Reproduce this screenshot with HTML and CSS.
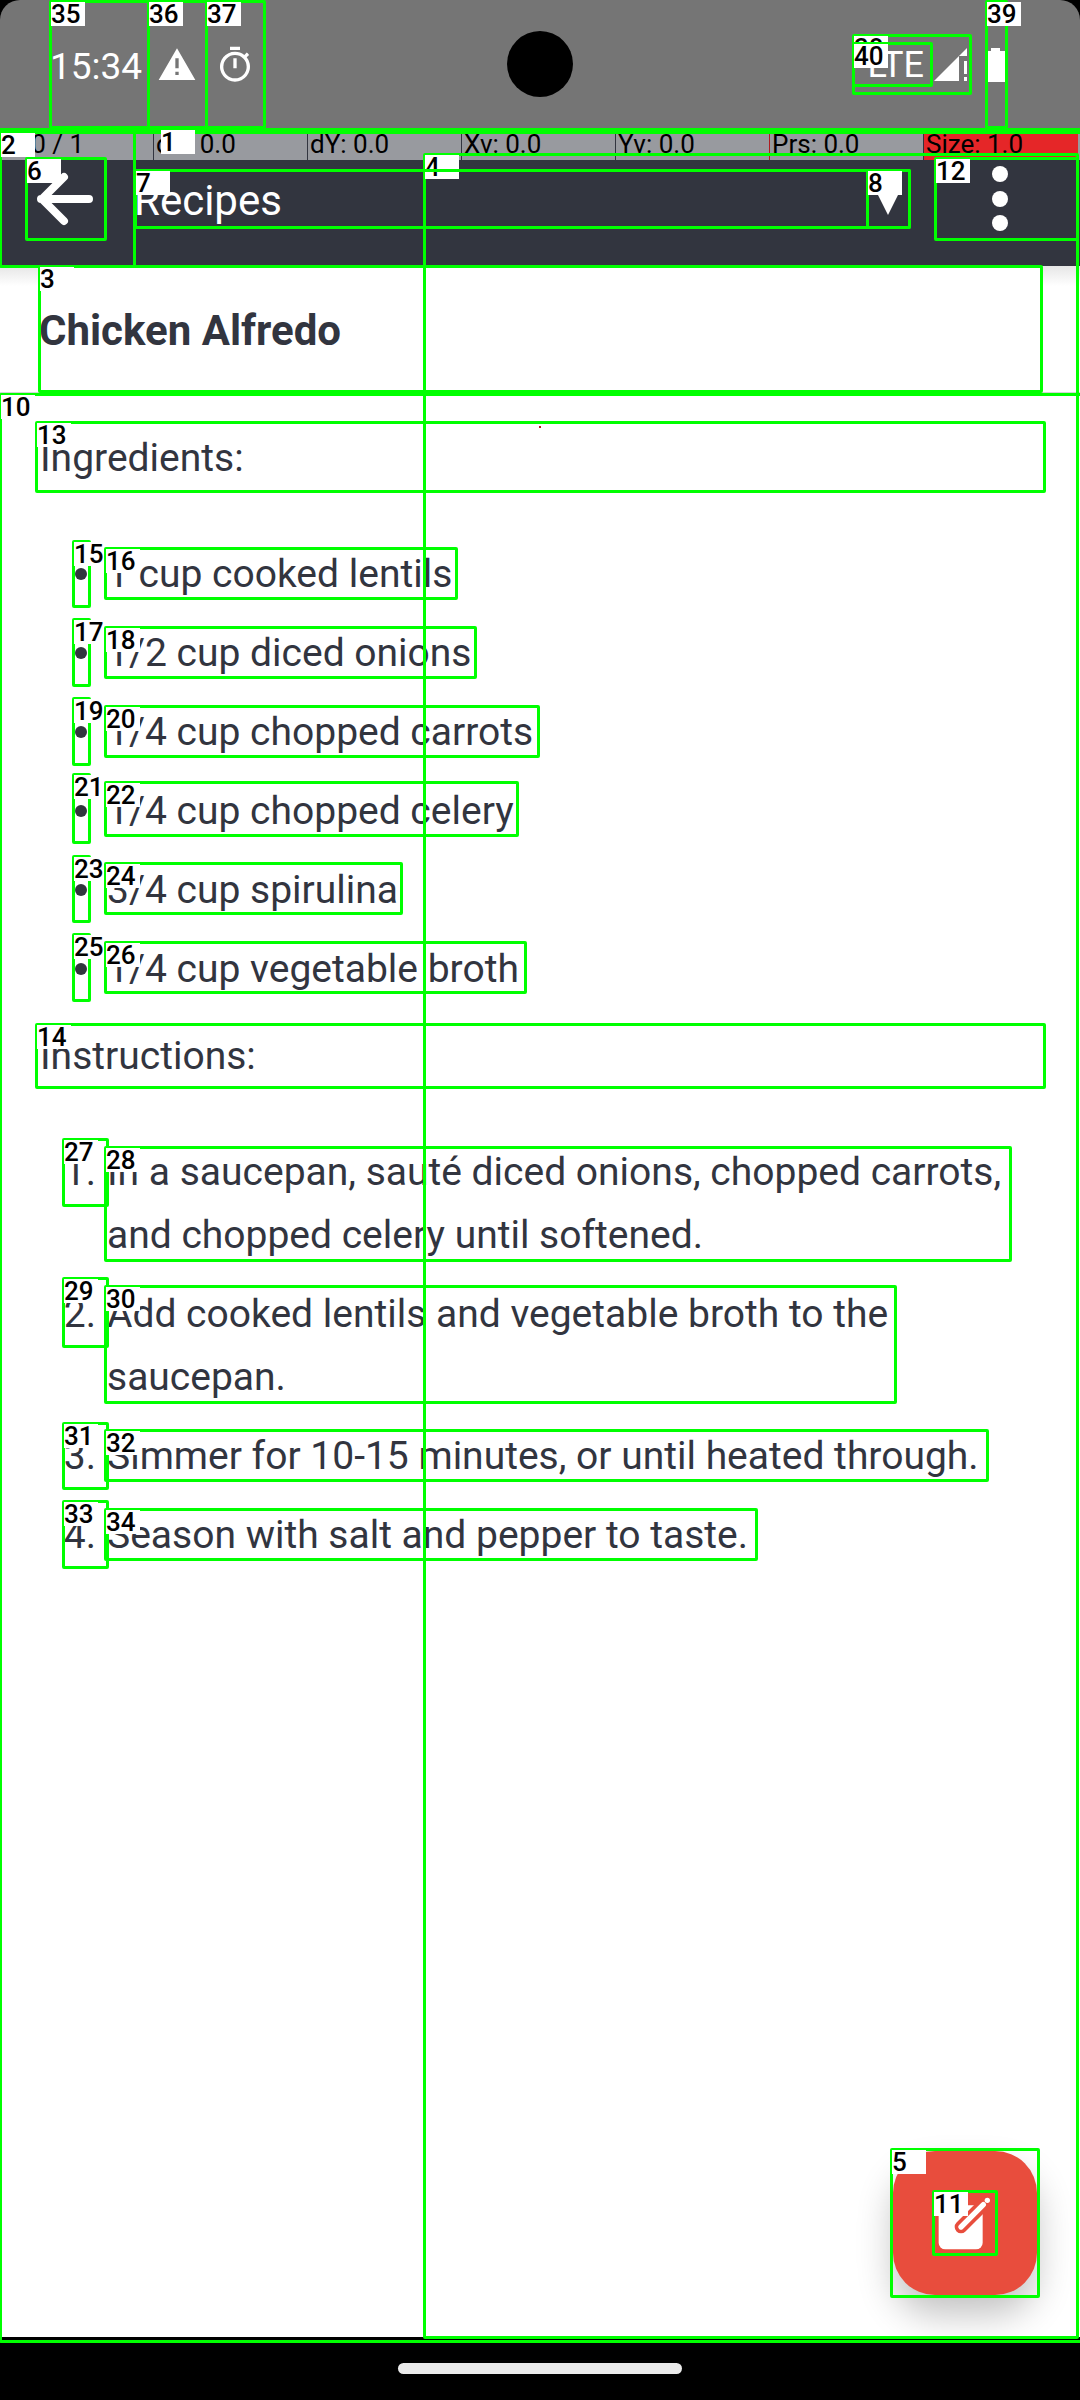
FILE: index.html
```html
<!DOCTYPE html>
<html lang="en">
<head>
<meta charset="utf-8">
<meta name="viewport" content="width=device-width, initial-scale=1">
<title>Recipes</title>
<link rel="stylesheet" href="styles.css">
</head>
<body>
<div class="screen">
  <div class="status">
    <div class="status-bar">
      <span class="clock">15:34</span>
      <svg class="status-icon" viewBox="0 0 24 24" aria-hidden="true"><path d="M1 21h22L12 2 1 21zm12-3h-2v-2h2v2zm0-4h-2V8h2v6z"/></svg>
      <svg class="status-icon timer" viewBox="0 0 24 24" aria-hidden="true"><path d="M9 1h6v2H9zM11 8h2v6h-2zM19.03 7.39l1.42-1.42c-.43-.51-.9-.99-1.41-1.41l-1.42 1.42A8.96 8.96 0 0 0 12 4a9 9 0 1 0 7.03 3.39zM12 20a7 7 0 1 1 0-14 7 7 0 0 1 0 14z"/></svg>
      <span class="network">LTE</span>
      <svg class="signal" viewBox="0 0 33 34" aria-hidden="true"><path d="M0 33L33 0V8H25V33zM30 13h3v13h-3zM30 29h3v4h-3z"/></svg>
      <svg class="battery" viewBox="0 0 18 34" aria-hidden="true"><path d="M4 0h9v3h5v31H0V3h4z"/></svg>
    </div>
    <span class="camera"></span>
  </div>

  <header class="toolbar">
    <button class="icon-button back" type="button" aria-label="Back">
      <svg viewBox="0 0 80 80" aria-hidden="true"><path d="M64 40H16M39 18L17 40l22 22"/></svg>
    </button>
    <button class="notebook" type="button">
      <span>Recipes</span>
      <svg viewBox="0 0 22 22" aria-hidden="true"><path d="M0 0h22L11 22z"/></svg>
    </button>
    <button class="icon-button more" type="button" aria-label="More options">
      <svg viewBox="0 0 16 66" aria-hidden="true"><circle cx="8" cy="8" r="8"/><circle cx="8" cy="33" r="8"/><circle cx="8" cy="57" r="8"/></svg>
    </button>
    <div class="pointer-bar">
      <span>P: 0 / 1</span><span>dX: 0.0</span><span>dY: 0.0</span><span>Xv: 0.0</span><span class="before-hot">Yv: 0.0</span><span>Prs: 0.0</span><span class="hot">Size: 1.0</span>
    </div>
  </header>

  <div class="note-title">
    <input type="text" value="Chicken Alfredo" aria-label="Note title">
  </div>

  <main class="note">
    <p>Ingredients:</p>
    <ul>
      <li><span class="dot"></span><span>1 cup cooked lentils</span></li>
      <li><span class="dot"></span><span>1/2 cup diced onions</span></li>
      <li><span class="dot"></span><span>1/4 cup chopped carrots</span></li>
      <li><span class="dot"></span><span>1/4 cup chopped celery</span></li>
      <li><span class="dot"></span><span>3/4 cup spirulina</span></li>
      <li><span class="dot"></span><span>1/4 cup vegetable broth</span></li>
    </ul>
    <p>Instructions:</p>
    <ol>
      <li><span class="number">1.</span><span>In a saucepan, sauté diced onions, chopped carrots, and chopped celery until softened.</span></li>
      <li><span class="number">2.</span><span>Add cooked lentils and vegetable broth to the saucepan.</span></li>
      <li><span class="number">3.</span><span>Simmer for 10-15 minutes, or until heated through.</span></li>
      <li><span class="number">4.</span><span>Season with salt and pepper to taste.</span></li>
    </ol>
    <button class="edit" type="button" aria-label="Edit note">
      <svg viewBox="216 210 198 198" aria-hidden="true">
        <rect class="sheet" x="236" y="256" width="132" height="132" rx="20"/>
        <path class="pen-gap" d="M303 321L400 224"/>
        <path class="pen" d="M303 321L370 254"/>
        <circle class="sheet" cx="382" cy="241" r="8"/>
      </svg>
    </button>
  </main>

  <nav class="gesture"><span></span></nav>

  <div class="marks">
    <i class="touch"></i>
    <div class="mark" style="left:-3px;top:128px;width:1086px;height:6px"></div>
    <div class="mark" style="left:159px;top:128px;width:930px;height:6px"><b>1</b></div>
    <div class="mark" style="left:-1px;top:131px;width:137px;height:137px"><b>2</b></div>
    <div class="mark" style="left:38px;top:265px;width:1005px;height:128px"><b>3</b></div>
    <div class="mark" style="left:423px;top:153px;width:656px;height:2186px"><b>4</b></div>
    <div class="mark" style="left:890px;top:2148px;width:150px;height:150px"><b>5</b></div>
    <div class="mark" style="left:25px;top:157px;width:82px;height:84px"><b>6</b></div>
    <div class="mark" style="left:134px;top:169px;width:777px;height:60px"><b>7</b></div>
    <div class="mark" style="left:866px;top:169px;width:45px;height:60px"><b>8</b></div>
    <div class="mark" style="left:-1px;top:393px;width:1084px;height:1950px"><b>10</b></div>
    <div class="mark" style="left:932px;top:2190px;width:66px;height:66px"><b>11</b></div>
    <div class="mark" style="left:934px;top:157px;width:145px;height:84px"><b>12</b></div>
    <div class="mark" style="left:35px;top:421px;width:1011px;height:72px"><b>13</b></div>
    <div class="mark" style="left:35px;top:1023px;width:1011px;height:66px"><b>14</b></div>
    <div class="mark" style="left:72px;top:540px;width:19px;height:68px"><b>15</b></div>
    <div class="mark" style="left:104px;top:547px;width:354px;height:53px"><b>16</b></div>
    <div class="mark" style="left:72px;top:618px;width:19px;height:69px"><b>17</b></div>
    <div class="mark" style="left:104px;top:626px;width:373px;height:53px"><b>18</b></div>
    <div class="mark" style="left:72px;top:697px;width:19px;height:69px"><b>19</b></div>
    <div class="mark" style="left:104px;top:705px;width:436px;height:53px"><b>20</b></div>
    <div class="mark" style="left:72px;top:773px;width:19px;height:71px"><b>21</b></div>
    <div class="mark" style="left:104px;top:781px;width:415px;height:56px"><b>22</b></div>
    <div class="mark" style="left:72px;top:855px;width:19px;height:68px"><b>23</b></div>
    <div class="mark" style="left:104px;top:862px;width:299px;height:53px"><b>24</b></div>
    <div class="mark" style="left:72px;top:933px;width:19px;height:69px"><b>25</b></div>
    <div class="mark" style="left:104px;top:941px;width:423px;height:53px"><b>26</b></div>
    <div class="mark" style="left:62px;top:1138px;width:47px;height:69px"><b>27</b></div>
    <div class="mark" style="left:104px;top:1146px;width:908px;height:116px"><b>28</b></div>
    <div class="mark" style="left:62px;top:1277px;width:47px;height:71px"><b>29</b></div>
    <div class="mark" style="left:104px;top:1285px;width:793px;height:119px"><b>30</b></div>
    <div class="mark" style="left:62px;top:1422px;width:47px;height:68px"><b>31</b></div>
    <div class="mark" style="left:104px;top:1429px;width:885px;height:53px"><b>32</b></div>
    <div class="mark" style="left:62px;top:1500px;width:47px;height:69px"><b>33</b></div>
    <div class="mark" style="left:104px;top:1508px;width:654px;height:53px"><b>34</b></div>
    <div class="mark" style="left:49px;top:0;width:101px;height:129px"><b>35</b></div>
    <div class="mark" style="left:147px;top:0;width:61px;height:129px"><b>36</b></div>
    <div class="mark" style="left:205px;top:0;width:61px;height:129px"><b>37</b></div>
    <div class="mark" style="left:852px;top:34px;width:120px;height:61px"><b>38</b></div>
    <div class="mark" style="left:985px;top:0;width:23px;height:129px"><b>39</b></div>
    <div class="mark" style="left:852px;top:42px;width:81px;height:45px"><b>40</b></div>
  </div>
</div>
</body>
</html>
```
FILE: styles.css
```css
* { box-sizing: border-box; }

body {
  margin: 0;
  background: #000;
  color: #32353f;
  font-family: Roboto, "Liberation Sans", sans-serif;
}

button {
  border: 0;
  padding: 0;
  background: none;
  color: inherit;
  font: inherit;
}

svg { display: block; }

.screen {
  position: relative;
  display: flex;
  flex-direction: column;
  min-height: 100vh;
}

/* System status bar */
.status {
  position: relative;
  background: #000;
}

.status-bar {
  display: flex;
  align-items: center;
  height: 128px;
  padding: 2px 75px 0 50px;
  border-radius: 20px 20px 0 0;
  background: #757575;
  color: #fff;
  fill: #fff;
}

.clock { padding-top: 2px; font-size: 37px; }
.status-icon { width: 40px; height: 40px; margin-left: 15px; }
.timer { margin-left: 18px; }
.network { margin-left: auto; font-size: 36px; }
.signal { width: 33px; height: 34px; margin-left: 10px; }
.battery { width: 18px; height: 34px; margin-left: 20px; }

.camera {
  position: absolute;
  top: 31px;
  left: calc(50% - 33px);
  width: 66px;
  height: 66px;
  border-radius: 50%;
  background: #000;
}

/* App toolbar */
.toolbar {
  position: relative;
  display: flex;
  align-items: center;
  height: 138px;
  padding: 4px 0 0 25px;
  background: #32353f;
  color: #fff;
}

.icon-button {
  display: grid;
  place-items: center;
  height: 80px;
  fill: #fff;
}

.back { width: 80px; }

.back svg {
  width: 80px;
  height: 80px;
  fill: none;
  stroke: #fff;
  stroke-width: 8;
  stroke-linecap: round;
  stroke-linejoin: round;
}

.notebook {
  display: flex;
  flex: 1;
  align-items: center;
  justify-content: space-between;
  height: 64px;
  margin-left: 29px;
  padding-top: 4px;
  font-size: 42px;
  line-height: 60px;
}

.notebook svg { width: 22px; height: 22px; margin-top: 6px; fill: #fff; }
.more { width: 160px; margin-left: 21px; }
.more svg { width: 16px; height: 66px; }

.pointer-bar {
  position: absolute;
  inset: 0 0 auto;
  display: grid;
  grid-template-columns: repeat(7, 154fr) 2fr;
  height: 32px;
  background: #989a9f;
  color: #000;
  font-size: 26px;
  line-height: 32px;
}

.pointer-bar span { padding-left: 2px; border-right: 1px solid #32353f; }
.pointer-bar .before-hot { border-color: #b01c20; }
.pointer-bar .hot { border: 0; background: #e52628; }

/* Note */
.note-title {
  padding: 0 39px;
  border-bottom: 1px solid #d4d4d6;
  background: linear-gradient(#e6e6e6, #fff 20px);
}

.note-title input {
  display: block;
  width: 100%;
  height: 126px;
  padding: 2px 0 0;
  border: 0;
  background: #fff;
  color: inherit;
  font: 700 42px Roboto, "Liberation Sans", sans-serif;
}

.note {
  position: relative;
  flex: 1;
  padding: 34px 40px;
  background: #fff;
  font-size: 39px;
  line-height: 63px;
}

.note p { margin: 0 0 53px; }

.note ul,
.note ol {
  display: grid;
  gap: 16px;
  margin: 0 0 24px;
  padding: 0;
  list-style: none;
}

.note li {
  display: grid;
  grid-template-columns: 56px 1fr;
  column-gap: 11px;
}

.number { text-align: right; }

.dot {
  justify-self: end;
  width: 12px;
  height: 12px;
  margin: 25px 9px 0 0;
  border-radius: 50%;
  background: #32353f;
}

.edit {
  position: absolute;
  right: 43px;
  bottom: 42px;
  display: grid;
  place-items: center;
  width: 144px;
  height: 144px;
  border-radius: 42px;
  background: #e84d3d;
  box-shadow: 0 20px 36px rgba(0, 0, 0, 0.24);
}

.edit svg { width: 66px; height: 66px; }
.sheet { fill: #fff; }
.pen-gap { stroke: #e84d3d; stroke-width: 38; stroke-linecap: round; }
.pen { stroke: #fff; stroke-width: 16; stroke-linecap: round; }

/* Gesture navigation */
.gesture {
  position: relative;
  display: flex;
  justify-content: center;
  height: 63px;
  padding-top: 26px;
  background: #000;
}

.gesture span {
  width: 284px;
  height: 11px;
  border-radius: 6px;
  background: #ebebeb;
}

/* Numbered element outlines drawn over the screen */
.marks {
  position: absolute;
  inset: 0;
  overflow: hidden;
  pointer-events: none;
}

.mark {
  position: absolute;
  border: 3px solid #0f0;
  border-radius: 2px;
}

.mark b {
  position: absolute;
  top: -1px;
  left: -1px;
  width: 34px;
  height: 24px;
  background: #fff;
  color: #000;
  font-size: 26px;
  font-weight: 500;
  line-height: 24px;
}

.touch {
  position: absolute;
  top: 426px;
  left: 539px;
  width: 2px;
  height: 2px;
  background: #b01c20;
}
```
